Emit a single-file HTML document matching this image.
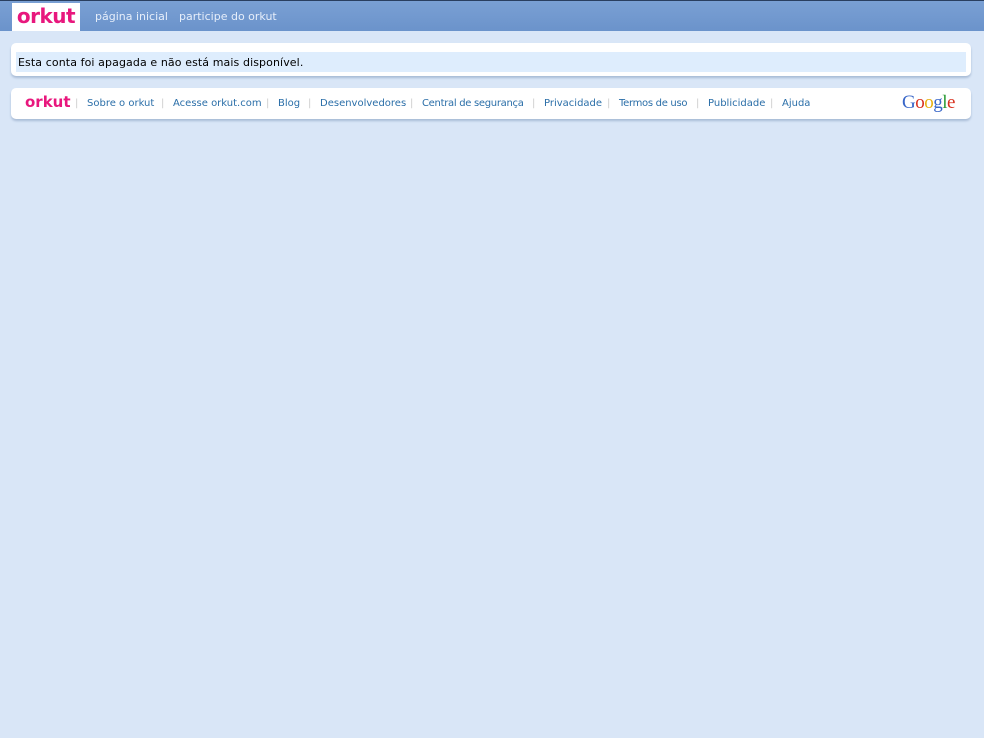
<!DOCTYPE html>
<html><head><meta charset="utf-8"><style>
body{margin:0;width:984px;height:738px;background:#d9e6f7;font-family:"DejaVu Sans","Liberation Sans",sans-serif;position:relative;overflow:hidden}
.top{position:absolute;left:0;top:0;width:984px;height:31px;background:linear-gradient(#7aa0d4,#6b93cb);border-top:1px solid #2a3f60;box-sizing:border-box}
.logo{position:absolute;left:12px;top:2px;width:68px;height:28px;background:#fff;color:#e8177d;font-weight:bold;font-size:20px;line-height:26px;text-align:center;letter-spacing:-0.5px}
.nav{position:absolute;top:9px;font-size:11px;color:#e6eefa}
.box{position:absolute;left:11px;width:960px;background:#fff;border-radius:5px;box-shadow:0 2px 2px #a9bcd6}
.msg{position:absolute;left:5px;top:9px;right:5px;height:20px;background:#deedfd;font-size:11px;line-height:21px;color:#000;padding-left:2px;letter-spacing:0.1px}
.ft{font-size:10px;color:#2a6ea8;position:absolute;top:10px;white-space:nowrap}
.sep{font-size:10px;color:#ccc;position:absolute;top:10px}
</style></head><body>
<div class="top"><div class="logo">orkut</div>
<span class="nav" style="left:95px">página inicial</span>
<span class="nav" style="left:179px">participe do orkut</span></div>
<div class="box" style="top:43px;height:33px"><div class="msg">Esta conta foi apagada e não está mais disponível.</div></div>
<div class="box" style="top:88px;height:31px">
<span style="position:absolute;left:14px;top:5px;color:#e8177d;font-weight:bold;font-size:15px">orkut</span>
<span class="sep" style="left:64px">|</span><span class="ft" style="left:76px">Sobre o orkut</span>
<span class="sep" style="left:150px">|</span><span class="ft" style="left:162px">Acesse orkut.com</span>
<span class="sep" style="left:255px">|</span><span class="ft" style="left:267px">Blog</span>
<span class="sep" style="left:297px">|</span><span class="ft" style="left:309px">Desenvolvedores</span>
<span class="sep" style="left:399px">|</span><span class="ft" style="left:411px;letter-spacing:-0.3px">Central de segurança</span>
<span class="sep" style="left:521px">|</span><span class="ft" style="left:533px">Privacidade</span>
<span class="sep" style="left:596px">|</span><span class="ft" style="left:608px;letter-spacing:-0.3px">Termos de uso</span>
<span class="sep" style="left:685px">|</span><span class="ft" style="left:697px">Publicidade</span>
<span class="sep" style="left:759px">|</span><span class="ft" style="left:771px">Ajuda</span>
<span style="position:absolute;left:891px;top:4px;font-family:'Liberation Serif',serif;font-size:19px;letter-spacing:-0.5px"><span style="color:#3866c8">G</span><span style="color:#d8301e">o</span><span style="color:#e8b010">o</span><span style="color:#3866c8">g</span><span style="color:#2a9a35">l</span><span style="color:#d8301e">e</span></span>
</div>
</body></html>
